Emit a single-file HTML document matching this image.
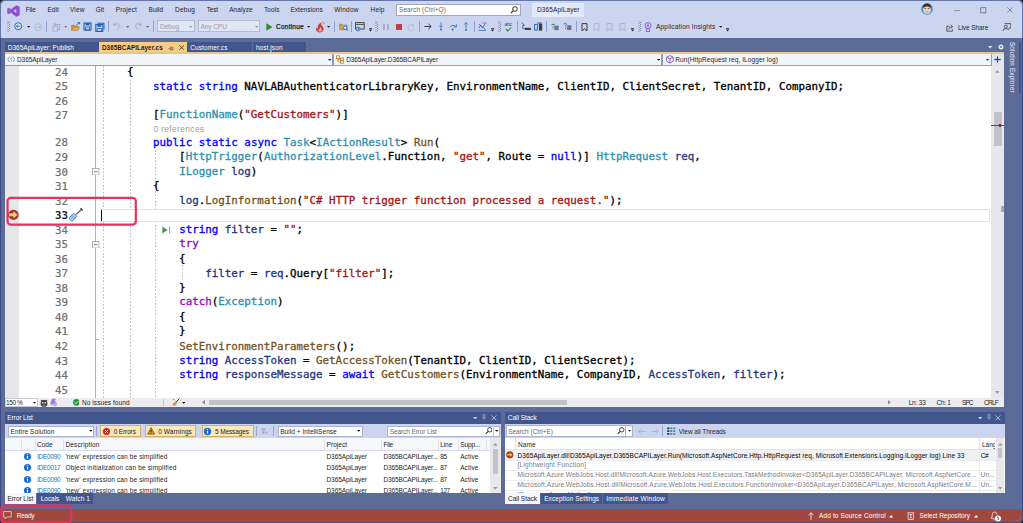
<!DOCTYPE html>
<html><head><meta charset="utf-8"><title>D365ApiLayer</title><style>
html,body{margin:0;padding:0;}
body{width:1023px;height:523px;overflow:hidden;background:#0c0c14;position:relative;font-family:"Liberation Sans",sans-serif;}
.b{position:absolute;box-sizing:border-box;}
.t{position:absolute;white-space:pre;line-height:10px;height:10px;font-family:"Liberation Sans",sans-serif;}
.c{position:absolute;white-space:pre;font-family:"DejaVu Sans Mono","Liberation Mono",monospace;font-size:10.83px;line-height:14px;height:14px;color:#000;left:100.9px;-webkit-text-stroke:0.3px;}
.ln{position:absolute;white-space:pre;font-family:"DejaVu Sans Mono","Liberation Mono",monospace;font-size:10.81px;line-height:14px;height:14px;color:#6e6e6e;-webkit-text-stroke:0.2px;width:30px;text-align:right;left:38.1px;}
.k{color:#0000ff}.ty{color:#2b91af}.s{color:#a31515}.ck{color:#8f08c4}.m{color:#74531f}.v{color:#1f377f}
</style></head><body>
<div class="b" style="left:0.00px;top:0.00px;width:1023.00px;height:523.00px;background:#6577a8;border-radius:4px;"></div>
<div class="b" style="left:0.00px;top:37.70px;width:1023.00px;height:470.90px;background:#3a4a82;"></div>
<div class="b" style="left:0.00px;top:508.60px;width:1023.00px;height:14.40px;background:#5a4870;border-radius:0 0 4px 4px;"></div>
<div class="b" style="left:0.90px;top:0.90px;width:1021.00px;height:521.10px;background:#5d6b99;border-radius:4.5px;"></div>
<div class="b" style="left:0.90px;top:1.00px;width:1021.00px;height:36.70px;background:#ccd5f0;border-radius:4.5px 4.5px 0 0;"></div>
<svg class="b" style="left:6.80px;top:5.00px;" width="13" height="12" viewBox="0 0 13 12"><path d="M9.2 0.4L12.4 1.8V10.2L9.2 11.6L4 7.4L2 9L0.4 8.2V3.8L2 3L4 4.6Z M9.4 3.6V8.4L6.2 6Z M1.9 4.9V7.1L3.3 6Z" fill="#8a4fd0" fill-rule="evenodd" stroke="#8a4fd0" stroke-width="0.4" stroke-linejoin="round"/></svg>
<span class="t" style="left:25.80px;top:5px;font-size:6.5px;color:#1e1e1e;letter-spacing:-0.171px;">File</span>
<span class="t" style="left:47.50px;top:5px;font-size:6.5px;color:#1e1e1e;letter-spacing:-0.001px;">Edit</span>
<span class="t" style="left:70.00px;top:5px;font-size:6.5px;color:#1e1e1e;letter-spacing:0.129px;">View</span>
<span class="t" style="left:95.80px;top:5px;font-size:6.5px;color:#1e1e1e;letter-spacing:-0.037px;">Git</span>
<span class="t" style="left:115.70px;top:5px;font-size:6.5px;color:#1e1e1e;letter-spacing:0.138px;">Project</span>
<span class="t" style="left:148.60px;top:5px;font-size:6.5px;color:#1e1e1e;letter-spacing:0.026px;">Build</span>
<span class="t" style="left:175.00px;top:5px;font-size:6.5px;color:#1e1e1e;letter-spacing:0.189px;">Debug</span>
<span class="t" style="left:206.70px;top:5px;font-size:6.5px;color:#1e1e1e;letter-spacing:-0.180px;">Test</span>
<span class="t" style="left:229.20px;top:5px;font-size:6.5px;color:#1e1e1e;letter-spacing:0.054px;">Analyze</span>
<span class="t" style="left:264.00px;top:5px;font-size:6.5px;color:#1e1e1e;letter-spacing:0.062px;">Tools</span>
<span class="t" style="left:290.40px;top:5px;font-size:6.5px;color:#1e1e1e;letter-spacing:0.050px;">Extensions</span>
<span class="t" style="left:334.20px;top:5px;font-size:6.5px;color:#1e1e1e;letter-spacing:0.246px;">Window</span>
<span class="t" style="left:370.60px;top:5px;font-size:6.5px;color:#1e1e1e;letter-spacing:0.156px;">Help</span>
<div class="b" style="left:396.30px;top:3.50px;width:125.20px;height:12.10px;background:#ffffff;border:1px solid #a3a6b5;"></div>
<span class="t" style="left:399.00px;top:5px;font-size:6.5px;color:#6a6a6a;letter-spacing:0.086px;">Search (Ctrl+Q)</span>
<svg class="b" style="left:509.50px;top:5.50px;" width="8" height="8" viewBox="0 0 8 8"><circle cx="5" cy="3" r="2.3" fill="none" stroke="#333" stroke-width="1"/><path d="M3.4 4.6 L0.8 7.2" stroke="#333" stroke-width="1.2"/></svg>
<div class="b" style="left:531.90px;top:3.10px;width:52.40px;height:13.50px;background:#e3e9fa;"></div>
<span class="t" style="left:537.00px;top:5px;font-size:6.5px;color:#1e1e1e;letter-spacing:0.108px;">D365ApiLayer</span>
<svg class="b" style="left:921.30px;top:3.40px;" width="12" height="12" viewBox="0 0 12 12"><circle cx="6" cy="6" r="5.8" fill="#3b8fd6"/><ellipse cx="6" cy="6.6" rx="4" ry="4.4" fill="#ead2bc"/><path d="M1.8 5.6Q2 0.4 6 0.6Q10 0.4 10.2 5.6Q8.6 3.2 6 3.4Q3.4 3.2 1.8 5.6Z" fill="#3a302c"/><path d="M3.6 5.6H5.2M6.8 5.6H8.4" stroke="#222" stroke-width="0.7"/><path d="M4.8 8.8Q6 9.6 7.2 8.8" stroke="#7a4a3a" stroke-width="0.5" fill="none"/></svg>
<div class="b" style="left:953.60px;top:9.50px;width:6.30px;height:0.60px;background:#9099b8;"></div>
<svg class="b" style="left:980.00px;top:6.80px;" width="7" height="7" viewBox="0 0 7 7"><rect x="0.75" y="0.75" width="5.1" height="5.1" fill="none" stroke="#5c5c66" stroke-width="0.7"/></svg>
<svg class="b" style="left:1006.50px;top:7.00px;" width="6" height="6" viewBox="0 0 6 6"><path d="M0.3 0.3 L5.7 5.7 M5.7 0.3 L0.3 5.7" stroke="#5a6a9a" stroke-width="0.7"/></svg>
<svg class="b" style="left:7.20px;top:21.00px;" width="4" height="11" viewBox="0 0 4 11"><path d="M0.5 0.5h1M2.1 1.5h1M0.5 2.5h1M2.1 3.5h1M0.5 4.5h1M2.1 5.5h1M0.5 6.5h1M2.1 7.5h1M0.5 8.5h1M2.1 9.5h1M0.5 10.5h1" stroke="#6f7ba6" stroke-width="0.9"/></svg>
<svg class="b" style="left:14.30px;top:22.40px;" width="8.4" height="8.4" viewBox="0 0 8.4 8.4"><circle cx="4.2" cy="4.2" r="3.5" fill="#dfe8fa" stroke="#2a6ab8" stroke-width="1"/><path d="M6.2 4.2H2.4M3.9 2.7L2.3 4.2L3.9 5.7" stroke="#2a6ab8" stroke-width="0.9" fill="none"/></svg>
<svg class="b" style="left:26.80px;top:25.90px;" width="3.2" height="2" viewBox="0 0 3.2 2"><path d="M0 0H3.2L1.6 1.8Z" fill="#1e1e1e"/></svg>
<svg class="b" style="left:33.50px;top:22.60px;" width="8.4" height="8.4" viewBox="0 0 8.4 8.4"><circle cx="4.2" cy="4.2" r="3.5" fill="none" stroke="#a9b1cc" stroke-width="0.8"/><path d="M2.2 4.2H6M4.6 2.8L6 4.2L4.6 5.6" stroke="#a9b1cc" stroke-width="0.8" fill="none"/></svg>
<div class="b" style="left:45.95px;top:21.20px;width:0.80px;height:11.20px;background:#8fa1cf;"></div>
<svg class="b" style="left:51.50px;top:22.00px;" width="9" height="10" viewBox="0 0 9 10"><path d="M2.5 0.8V3M1.4 1.9H3.6" stroke="#9aa4c4" stroke-width="0.7"/><rect x="3.2" y="2.4" width="4.6" height="5" fill="none" stroke="#9aa4c4" stroke-width="0.8"/><rect x="1" y="4.2" width="4.4" height="5" fill="#ccd5f0" stroke="#9aa4c4" stroke-width="0.8"/></svg>
<svg class="b" style="left:64.10px;top:25.90px;" width="3.2" height="2" viewBox="0 0 3.2 2"><path d="M0 0H3.2L1.6 1.8Z" fill="#6f7894"/></svg>
<svg class="b" style="left:70.80px;top:21.80px;" width="10" height="9" viewBox="0 0 10 9"><path d="M0.6 3H3.2L4 4H7V8.2H0.6Z" fill="#c9943e" stroke="#a3742a" stroke-width="0.5"/><path d="M0.8 8.2L2.2 5.2H8.6L7 8.2Z" fill="#e0b568" stroke="#a3742a" stroke-width="0.5"/><path d="M5.6 3L8.4 0.6M8.7 2.4V0.4H6.7" stroke="#2a6ab8" stroke-width="1" fill="none"/></svg>
<svg class="b" style="left:83.20px;top:22.40px;" width="9" height="9" viewBox="0 0 9 9"><rect x="1" y="1" width="7" height="7" fill="none" stroke="#1a62b8" stroke-width="1.1"/><rect x="2.6" y="1" width="3.8" height="2.4" fill="#1a62b8"/><rect x="2.4" y="5" width="4.2" height="3" fill="none" stroke="#1a62b8" stroke-width="0.8"/></svg>
<svg class="b" style="left:95.20px;top:22.00px;" width="10" height="10" viewBox="0 0 10 10"><path d="M2.4 1.2H9V7.6" fill="none" stroke="#1a62b8" stroke-width="1"/><rect x="0.8" y="2.4" width="7" height="7" fill="none" stroke="#1a62b8" stroke-width="1.1"/><rect x="2.4000000000000004" y="2.4" width="3.8" height="2.4" fill="#1a62b8"/><rect x="2.2" y="6.4" width="4.2" height="3" fill="none" stroke="#1a62b8" stroke-width="0.8"/></svg>
<div class="b" style="left:108.15px;top:21.20px;width:0.80px;height:11.20px;background:#8fa1cf;"></div>
<svg class="b" style="left:113.40px;top:22.20px;" width="8" height="8.4" viewBox="0 0 8 8.4"><path d="M0.8 0.6V3.2H3.4" fill="none" stroke="#a3abc8" stroke-width="0.9"/><path d="M1 3Q3.8 0.4 6 2.4Q7.8 4.6 3.6 7.8" fill="none" stroke="#a3abc8" stroke-width="0.9"/></svg>
<svg class="b" style="left:126.00px;top:25.90px;" width="3.2" height="2" viewBox="0 0 3.2 2"><path d="M0 0H3.2L1.6 1.8Z" fill="#6a6f84"/></svg>
<svg class="b" style="left:133.60px;top:22.20px;" width="8" height="8.4" viewBox="0 0 8 8.4"><path d="M7.2 0.6V3.2H4.6" fill="none" stroke="#a3abc8" stroke-width="0.9"/><path d="M7 3Q4.2 0.4 2 2.4Q0.2 4.6 4.4 7.8" fill="none" stroke="#a3abc8" stroke-width="0.9"/></svg>
<svg class="b" style="left:146.00px;top:25.90px;" width="3.2" height="2" viewBox="0 0 3.2 2"><path d="M0 0H3.2L1.6 1.8Z" fill="#6a6f84"/></svg>
<div class="b" style="left:152.95px;top:21.20px;width:0.80px;height:11.20px;background:#8fa1cf;"></div>
<div class="b" style="left:157.30px;top:20.40px;width:37.30px;height:12.00px;background:#e1e6f5;border:1px solid #b4b9cc;"></div>
<span class="t" style="left:160.00px;top:22px;font-size:6.5px;color:#969cb2;letter-spacing:0.009px;">Debug</span>
<svg class="b" style="left:188.90px;top:25.90px;" width="3.2" height="2" viewBox="0 0 3.2 2"><path d="M0 0H3.2L1.6 1.8Z" fill="#8a92ad"/></svg>
<div class="b" style="left:197.90px;top:20.40px;width:62.30px;height:12.00px;background:#e1e6f5;border:1px solid #b4b9cc;"></div>
<span class="t" style="left:200.40px;top:22px;font-size:6.5px;color:#969cb2;letter-spacing:-0.048px;">Any CPU</span>
<svg class="b" style="left:254.80px;top:25.90px;" width="3.2" height="2" viewBox="0 0 3.2 2"><path d="M0 0H3.2L1.6 1.8Z" fill="#8a92ad"/></svg>
<svg class="b" style="left:265.80px;top:22.80px;" width="7" height="8" viewBox="0 0 7 8"><path d="M0.3 0.3L6.5 4L0.3 7.7Z" fill="#2e8b2e"/></svg>
<span class="t" style="left:276.10px;top:22px;font-size:6.5px;color:#1e1e1e;letter-spacing:0.221px;-webkit-text-stroke:0.25px;">Continue</span>
<svg class="b" style="left:307.30px;top:25.90px;" width="3.2" height="2" viewBox="0 0 3.2 2"><path d="M0 0H3.2L1.6 1.8Z" fill="#1e1e1e"/></svg>
<svg class="b" style="left:315.00px;top:21.60px;" width="10" height="11" viewBox="0 0 10 11"><path d="M4.8 10.4C1.4 10.4 0.4 7.6 1.6 5.6C2 6.4 2.6 6.6 2.8 6.4C2.2 3.8 4 1.6 6.2 0.6C5.6 2.4 6.6 3.4 7.6 4.6C9.4 6.8 8.6 10.4 4.8 10.4Z" fill="#d13438"/><path d="M4.9 9.8C3.4 9.8 2.8 8.4 3.6 7.2C4 7.8 4.6 7.6 4.6 7C4.6 6 5.4 5.4 6 5C5.8 6 6.8 6.6 6.8 7.8C6.8 9 6 9.8 4.9 9.8Z" fill="#f4b8a8"/><path d="M6.4 0.6L9.6 1.2" stroke="#d13438" stroke-width="0.6"/></svg>
<svg class="b" style="left:327.40px;top:25.90px;" width="3.2" height="2" viewBox="0 0 3.2 2"><path d="M0 0H3.2L1.6 1.8Z" fill="#1e1e1e"/></svg>
<div class="b" style="left:334.05px;top:21.20px;width:0.80px;height:11.20px;background:#8fa1cf;"></div>
<svg class="b" style="left:338.60px;top:22.40px;" width="10" height="9" viewBox="0 0 10 9"><path d="M0.6 2.2H3.4L4.2 3.2H8V7.8H0.6Z" fill="#d9a04a" stroke="#a9702a" stroke-width="0.6"/><circle cx="6.2" cy="5.8" r="1.7" fill="#e8eefc" stroke="#1a62b8" stroke-width="0.8"/><path d="M7.4 7L9 8.6" stroke="#1a62b8" stroke-width="1"/></svg>
<div class="b" style="left:351.05px;top:21.20px;width:0.80px;height:11.20px;background:#8fa1cf;"></div>
<svg class="b" style="left:355.40px;top:22.20px;" width="10" height="9.6" viewBox="0 0 10 9.6"><rect x="0.6" y="0.6" width="8.6" height="6.4" fill="none" stroke="#3c3c3c" stroke-width="0.9"/><path d="M0.6 2.4H9.2" stroke="#3c3c3c" stroke-width="0.9"/><circle cx="3" cy="7" r="2" fill="#ccd5f0" stroke="#1a62b8" stroke-width="0.8"/><path d="M2 7H4M3.2 6.2L4 7L3.2 7.8" stroke="#1a62b8" stroke-width="0.6" fill="none"/></svg>
<svg class="b" style="left:369.00px;top:28.30px;" width="3.2" height="4" viewBox="0 0 3.2 4"><path d="M0 0.4H3.2" stroke="#1e1e1e" stroke-width="0.8"/><path d="M0 1.6H3.2L1.6 3.4Z" fill="#1e1e1e"/></svg>
<svg class="b" style="left:374.90px;top:21.00px;" width="4" height="11" viewBox="0 0 4 11"><path d="M0.5 0.5h1M2.1 1.5h1M0.5 2.5h1M2.1 3.5h1M0.5 4.5h1M2.1 5.5h1M0.5 6.5h1M2.1 7.5h1M0.5 8.5h1M2.1 9.5h1M0.5 10.5h1" stroke="#6f7ba6" stroke-width="0.9"/></svg>
<div class="b" style="left:383.00px;top:23.80px;width:2.40px;height:6.20px;background:#a7afc9;"></div>
<div class="b" style="left:386.70px;top:23.80px;width:2.40px;height:6.20px;background:#a7afc9;"></div>
<div class="b" style="left:395.60px;top:23.80px;width:6.20px;height:5.90px;background:#c8393f;border-radius:0.6px;"></div>
<svg class="b" style="left:406.60px;top:22.60px;" width="9" height="9" viewBox="0 0 9 9"><path d="M6.6 2.4A3.3 3.3 0 1 0 7.6 5" fill="none" stroke="#a9b1cc" stroke-width="0.8"/><path d="M5.4 0.8L7 2.4L5.2 3.6" fill="none" stroke="#a9b1cc" stroke-width="0.8"/></svg>
<div class="b" style="left:418.85px;top:21.20px;width:0.80px;height:11.20px;background:#8fa1cf;"></div>
<svg class="b" style="left:424.40px;top:23.40px;" width="8" height="7" viewBox="0 0 8 7"><path d="M0.4 3.5H7M4.4 0.8L7.2 3.5L4.4 6.2" fill="none" stroke="#2a2a2a" stroke-width="0.9"/></svg>
<svg class="b" style="left:438.20px;top:22.00px;" width="6" height="10" viewBox="0 0 6 10"><path d="M3 0.4V5.2M1.2 3.6L3 5.5L4.8 3.6" fill="none" stroke="#2a6ab8" stroke-width="0.8"/><circle cx="3" cy="7.6" r="1" fill="#2a6ab8"/></svg>
<svg class="b" style="left:449.20px;top:23.00px;" width="8.4" height="8" viewBox="0 0 8.4 8"><path d="M0.8 4.4Q3.8 0.6 6.8 3.6" fill="none" stroke="#2a6ab8" stroke-width="0.9"/><path d="M7.4 1.2V4H4.6" fill="none" stroke="#2a6ab8" stroke-width="0.8"/><circle cx="3.6" cy="6.4" r="1" fill="#2a6ab8"/></svg>
<svg class="b" style="left:462.80px;top:22.00px;" width="6" height="10" viewBox="0 0 6 10"><path d="M3 6V0.8M1.2 2.5L3 0.6L4.8 2.5" fill="none" stroke="#2a6ab8" stroke-width="0.8"/><circle cx="3" cy="7.8" r="1" fill="#2a6ab8"/></svg>
<div class="b" style="left:473.65px;top:21.20px;width:0.80px;height:11.20px;background:#8fa1cf;"></div>
<svg class="b" style="left:478.40px;top:22.40px;" width="9" height="9" viewBox="0 0 9 9"><path d="M0.6 6.4L2.6 3.4L4.6 5.8L7.6 1.2" fill="none" stroke="#7a4fc0" stroke-width="0.9"/><path d="M1 2L7.6 7.6" stroke="#1a62b8" stroke-width="0.8"/><path d="M0.6 8.4H8" stroke="#1a62b8" stroke-width="0.7"/><path d="M4 1H8.4" stroke="#7a4fc0" stroke-width="0.7"/></svg>
<svg class="b" style="left:491.40px;top:28.30px;" width="3.2" height="4" viewBox="0 0 3.2 4"><path d="M0 0.4H3.2" stroke="#1e1e1e" stroke-width="0.8"/><path d="M0 1.6H3.2L1.6 3.4Z" fill="#1e1e1e"/></svg>
<svg class="b" style="left:498.00px;top:21.00px;" width="4" height="11" viewBox="0 0 4 11"><path d="M0.5 0.5h1M2.1 1.5h1M0.5 2.5h1M2.1 3.5h1M0.5 4.5h1M2.1 5.5h1M0.5 6.5h1M2.1 7.5h1M0.5 8.5h1M2.1 9.5h1M0.5 10.5h1" stroke="#6f7ba6" stroke-width="0.9"/></svg>
<span class="t" style="left:504.60px;top:20px;font-size:4.6px;color:#3c3c3c;letter-spacing:-0.007px;">abc</span>
<svg class="b" style="left:505.00px;top:27.00px;" width="7" height="5" viewBox="0 0 7 5"><path d="M0.8 2L2.8 4L6.2 0.6" fill="none" stroke="#2e8b2e" stroke-width="1.1"/></svg>
<div class="b" style="left:516.65px;top:21.20px;width:0.80px;height:11.20px;background:#8fa1cf;"></div>
<svg class="b" style="left:520.60px;top:22.40px;" width="10.4" height="9" viewBox="0 0 10.4 9"><path d="M0.6 0.6L3.4 3.4H1.8V6.6H3.6" fill="none" stroke="#1a62b8" stroke-width="0.9"/><rect x="3.8" y="5.8" width="6" height="2.2" fill="#3c3c3c"/></svg>
<svg class="b" style="left:533.80px;top:22.20px;" width="9" height="9.4" viewBox="0 0 9 9.4"><rect x="0.6" y="2.4" width="3" height="5.6" fill="none" stroke="#1a62b8" stroke-width="0.9"/><rect x="5" y="1.6" width="3.2" height="7" fill="#3c3c3c"/><path d="M3.2 1H7.8" stroke="#3c3c3c" stroke-width="0.8"/></svg>
<div class="b" style="left:546.15px;top:21.20px;width:0.80px;height:11.20px;background:#8fa1cf;"></div>
<svg class="b" style="left:551.20px;top:23.00px;" width="8.4" height="8" viewBox="0 0 8.4 8"><path d="M0.6 1.4H3.8" stroke="#2e8b2e" stroke-width="1"/><rect x="3.4" y="2.6" width="4.2" height="4.6" fill="#6b7390"/><path d="M1.4 3.4H3M1.4 5H3" stroke="#6b7390" stroke-width="0.7"/></svg>
<svg class="b" style="left:563.00px;top:22.40px;" width="9" height="9" viewBox="0 0 9 9"><path d="M0.8 2.2Q2.4 0.2 3.8 2.2L2.2 3.8" fill="none" stroke="#1a62b8" stroke-width="0.9"/><rect x="4.2" y="3.2" width="4.2" height="4.8" fill="#6b7390"/><path d="M2 5H3.8M2 6.6H3.8" stroke="#6b7390" stroke-width="0.7"/></svg>
<div class="b" style="left:575.85px;top:21.20px;width:0.80px;height:11.20px;background:#8fa1cf;"></div>
<svg class="b" style="left:581.40px;top:22.80px;" width="8" height="8.6" viewBox="0 0 8 8.6"><path d="M1 0.6H6V7.8L3.5 5.8L1 7.8Z" fill="none" stroke="#2a2a2a" stroke-width="0.9"/></svg>
<svg class="b" style="left:593.40px;top:22.80px;" width="8" height="8.6" viewBox="0 0 8 8.6"><path d="M1 0.6H6V7.8L3.5 5.8L1 7.8Z" fill="none" stroke="#aab2cc" stroke-width="0.9"/></svg>
<svg class="b" style="left:606.00px;top:22.80px;" width="8" height="8.6" viewBox="0 0 8 8.6"><path d="M1 0.6H6V7.8L3.5 5.8L1 7.8Z" fill="none" stroke="#aab2cc" stroke-width="0.9"/></svg>
<svg class="b" style="left:618.80px;top:22.80px;" width="8" height="8.6" viewBox="0 0 8 8.6"><path d="M1 0.6H6V7.8L3.5 5.8L1 7.8Z" fill="none" stroke="#aab2cc" stroke-width="0.9"/></svg>
<svg class="b" style="left:631.20px;top:28.30px;" width="3.2" height="4" viewBox="0 0 3.2 4"><path d="M0 0.4H3.2" stroke="#1e1e1e" stroke-width="0.8"/><path d="M0 1.6H3.2L1.6 3.4Z" fill="#1e1e1e"/></svg>
<svg class="b" style="left:637.60px;top:21.00px;" width="4" height="11" viewBox="0 0 4 11"><path d="M0.5 0.5h1M2.1 1.5h1M0.5 2.5h1M2.1 3.5h1M0.5 4.5h1M2.1 5.5h1M0.5 6.5h1M2.1 7.5h1M0.5 8.5h1M2.1 9.5h1M0.5 10.5h1" stroke="#6f7ba6" stroke-width="0.9"/></svg>
<svg class="b" style="left:644.40px;top:22.20px;" width="8" height="10" viewBox="0 0 8 10"><circle cx="4" cy="3.6" r="3" fill="none" stroke="#8a4fd0" stroke-width="0.9"/><circle cx="4" cy="3.6" r="1.1" fill="#8a4fd0"/><path d="M2.8 6.4L2.2 9.4H5.8L5.2 6.4" fill="none" stroke="#8a4fd0" stroke-width="0.9"/></svg>
<span class="t" style="left:656.10px;top:22px;font-size:6.5px;color:#1e1e1e;letter-spacing:0.164px;">Application Insights</span>
<svg class="b" style="left:719.00px;top:25.90px;" width="3.2" height="2" viewBox="0 0 3.2 2"><path d="M0 0H3.2L1.6 1.8Z" fill="#1e1e1e"/></svg>
<svg class="b" style="left:726.40px;top:28.30px;" width="3.2" height="4" viewBox="0 0 3.2 4"><path d="M0 0.4H3.2" stroke="#1e1e1e" stroke-width="0.8"/><path d="M0 1.6H3.2L1.6 3.4Z" fill="#1e1e1e"/></svg>
<svg class="b" style="left:945.80px;top:24.00px;" width="8.4" height="8" viewBox="0 0 8.4 8"><path d="M3.4 2.2H0.8V7.2H6.4V5.4" fill="none" stroke="#3c3c3c" stroke-width="0.8"/><path d="M2.6 5.6Q3 2.6 6.2 2.6M4.8 0.8L6.8 2.6L4.8 4.4" fill="none" stroke="#3c3c3c" stroke-width="0.8"/></svg>
<span class="t" style="left:957.90px;top:23px;font-size:6.5px;color:#1e1e1e;letter-spacing:-0.078px;">Live Share</span>
<svg class="b" style="left:1002.00px;top:22.80px;" width="9.4" height="8.6" viewBox="0 0 9.4 8.6"><path d="M2.6 0.6H8.8V5H7.4" fill="none" stroke="#3c3c3c" stroke-width="0.8"/><circle cx="3.8" cy="3.6" r="1.5" fill="none" stroke="#3c3c3c" stroke-width="0.8"/><path d="M0.8 8.2Q1.2 5.6 3.8 5.6Q5.4 5.6 6.2 6.8L7.6 5" fill="none" stroke="#3c3c3c" stroke-width="0.8"/></svg>
<div class="b" style="left:4.90px;top:41.80px;width:94.40px;height:10.80px;background:#40568d;"></div>
<span class="t" style="left:7.80px;top:43px;font-size:6.5px;color:#ffffff;letter-spacing:-0.001px;">D365ApiLayer: Publish</span>
<div class="b" style="left:99.30px;top:41.80px;width:87.80px;height:11.20px;background:#f5cc84;"></div>
<span class="t" style="left:102.00px;top:43px;font-size:6.3px;color:#1e1e1e;letter-spacing:0.049px;font-weight:bold;">D365BCAPILayer.cs</span>
<svg class="b" style="left:167.60px;top:45.60px;" width="6" height="5" viewBox="0 0 6 5"><path d="M0.4 2.6H2.4M2.6 0.8V4.4M2.8 1.4H5V3.8H2.8M2.8 3.2H5" stroke="#6b4a14" stroke-width="0.6" fill="none"/></svg>
<svg class="b" style="left:178.70px;top:45.20px;" width="5.4" height="5.2" viewBox="0 0 5.4 5.2"><path d="M0.4 0.4L5 4.8M5 0.4L0.4 4.8" stroke="#5a3c10" stroke-width="0.9"/></svg>
<div class="b" style="left:187.30px;top:41.80px;width:65.00px;height:10.80px;background:#40568d;"></div>
<span class="t" style="left:190.20px;top:43px;font-size:6.5px;color:#ffffff;letter-spacing:0.107px;">Customer.cs</span>
<div class="b" style="left:252.90px;top:41.80px;width:54.20px;height:10.80px;background:#40568d;border-right:1px dotted #7f8ab5;"></div>
<span class="t" style="left:255.90px;top:43px;font-size:6.5px;color:#ffffff;letter-spacing:0.074px;">host.json</span>
<div class="b" style="left:4.90px;top:52.30px;width:999.10px;height:1.50px;background:#e6c68a;"></div>
<svg class="b" style="left:988.40px;top:46.40px;" width="4.2" height="2.6" viewBox="0 0 4.2 2.6"><path d="M0 0H4.2L2.1 2.4Z" fill="#e6eaf7"/></svg>
<svg class="b" style="left:997.60px;top:44.40px;" width="6" height="6" viewBox="0 0 6 6"><circle cx="3" cy="3" r="1.7" fill="none" stroke="#e6eaf7" stroke-width="1.2"/><path d="M3 0V6M0 3H6M0.9 0.9L5.1 5.1M5.1 0.9L0.9 5.1" stroke="#e6eaf7" stroke-width="0.7"/><circle cx="3" cy="3" r="0.9" fill="#5d6b99"/></svg>
<div class="b" style="left:4.90px;top:53.60px;width:999.10px;height:12.40px;background:#8e9bc3;"></div>
<div class="b" style="left:4.90px;top:53.60px;width:327.60px;height:11.40px;background:#f3f5fc;"></div>
<div class="b" style="left:334.40px;top:53.60px;width:326.30px;height:11.40px;background:#f3f5fc;"></div>
<div class="b" style="left:663.00px;top:53.60px;width:327.60px;height:11.40px;background:#f3f5fc;"></div>
<div class="b" style="left:991.50px;top:53.60px;width:12.50px;height:12.00px;background:#dfe5f7;"></div>
<svg class="b" style="left:6.60px;top:55.00px;" width="8.6" height="8.6" viewBox="0 0 8.6 8.6"><path d="M2.6 1.6L0.8 4.3L2.6 7" fill="none" stroke="#3a8ad8" stroke-width="0.8"/><path d="M6 1.6L7.8 4.3L6 7" fill="none" stroke="#3a8ad8" stroke-width="0.8"/><path d="M5 0.4L2.8 4.6H4.4L3.4 8.2L6 3.6H4.4Z" fill="#f2a33a"/></svg>
<span class="t" style="left:17.00px;top:55px;font-size:6.5px;color:#1e1e1e;letter-spacing:-0.075px;">D365ApiLayer</span>
<svg class="b" style="left:327.60px;top:58.60px;" width="3.2" height="2" viewBox="0 0 3.2 2"><path d="M0 0H3.2L1.6 1.8Z" fill="#1e1e1e"/></svg>
<svg class="b" style="left:336.20px;top:55.00px;" width="8.4" height="8.6" viewBox="0 0 8.4 8.6"><rect x="0.6" y="0.8" width="3" height="2.6" fill="none" stroke="#c27d1a" stroke-width="0.8"/><rect x="4.6" y="3" width="3" height="2.6" fill="none" stroke="#c27d1a" stroke-width="0.8"/><rect x="4.6" y="5.8" width="3" height="2.4" fill="none" stroke="#c27d1a" stroke-width="0.8"/><path d="M2 3.4V7H4.6M2 4.4H4.6" fill="none" stroke="#c27d1a" stroke-width="0.7"/></svg>
<span class="t" style="left:346.20px;top:55px;font-size:6.5px;color:#1e1e1e;letter-spacing:-0.080px;">D365ApiLayer.D365BCAPILayer</span>
<svg class="b" style="left:656.80px;top:58.60px;" width="3.2" height="2" viewBox="0 0 3.2 2"><path d="M0 0H3.2L1.6 1.8Z" fill="#1e1e1e"/></svg>
<svg class="b" style="left:665.80px;top:55.00px;" width="7.8" height="8.6" viewBox="0 0 7.8 8.6"><path d="M3.9 0.6L7.2 2.2V6.2L3.9 8L0.6 6.2V2.2Z M0.6 2.2L3.9 3.8L7.2 2.2M3.9 3.8V8" fill="none" stroke="#7a3fc0" stroke-width="0.8"/></svg>
<span class="t" style="left:675.30px;top:55px;font-size:6.5px;color:#1e1e1e;letter-spacing:0.090px;">Run(HttpRequest req, ILogger log)</span>
<svg class="b" style="left:986.40px;top:58.60px;" width="3.2" height="2" viewBox="0 0 3.2 2"><path d="M0 0H3.2L1.6 1.8Z" fill="#1e1e1e"/></svg>
<svg class="b" style="left:994.20px;top:55.60px;" width="7" height="7" viewBox="0 0 7 7"><path d="M0.4 3.5H6.6M3.5 0.4V6.6" stroke="#1e1e1e" stroke-width="0.9"/><path d="M0.4 2.9H6.6M0.4 4.1H6.6" stroke="#777" stroke-width="0.5"/></svg>
<div class="b" style="left:4.90px;top:66.00px;width:999.10px;height:331.60px;background:#ffffff;"></div>
<div class="b" style="left:4.90px;top:66.00px;width:14.10px;height:331.60px;background:#e6e7e8;"></div>
<div class="b" style="left:94.90px;top:66.00px;width:1.00px;height:331.60px;background:#b2b2b2;"></div>
<div class="b" style="left:102.7px;top:66px;width:1px;height:331.6px;background:repeating-linear-gradient(to bottom,#c6c6c6 0,#c6c6c6 1.8px,transparent 1.8px,transparent 3.4px);"></div>
<div class="b" style="left:129.5px;top:80px;width:1px;height:317.6px;background:repeating-linear-gradient(to bottom,#c6c6c6 0,#c6c6c6 1.8px,transparent 1.8px,transparent 3.4px);"></div>
<div class="b" style="left:155.3px;top:150px;width:1px;height:247.60000000000002px;background:repeating-linear-gradient(to bottom,#c6c6c6 0,#c6c6c6 1.8px,transparent 1.8px,transparent 3.4px);"></div>
<div class="b" style="left:181.8px;top:265px;width:1px;height:15px;background:repeating-linear-gradient(to bottom,#c6c6c6 0,#c6c6c6 1.8px,transparent 1.8px,transparent 3.4px);"></div>
<div class="b" style="left:991.20px;top:66.00px;width:12.80px;height:331.60px;background:#e8e8ec;"></div>
<svg class="b" style="left:995.40px;top:69.80px;" width="4.6" height="3" viewBox="0 0 4.6 3"><path d="M0 2.8H4.6L2.3 0Z" fill="#9a9aa2"/></svg>
<div class="b" style="left:993.90px;top:112.40px;width:7.70px;height:33.70px;background:#c2c3c9;"></div>
<div class="b" style="left:991.20px;top:125.10px;width:12.80px;height:1.40px;background:#3a3acc;"></div>
<div class="b" style="left:998.50px;top:124.20px;width:2.80px;height:3.20px;background:#7a3040;"></div>
<div class="b" style="left:1001.20px;top:206.20px;width:2.80px;height:6.10px;background:#a8a8ae;"></div>
<svg class="b" style="left:995.40px;top:391.00px;" width="4.6" height="3" viewBox="0 0 4.6 3"><path d="M0 0H4.6L2.3 2.8Z" fill="#9a9aa2"/></svg>
<div class="b" style="left:100.00px;top:209.00px;width:890.00px;height:12.60px;background:#ffffff;border:1px solid #e2e2ee;border-left:none;"></div>
<div class="ln" style="top:66.00px;">24</div>
<div class="c" style="top:65.00px;">    {</div>
<div class="ln" style="top:80.00px;">25</div>
<div class="c" style="top:80.00px;">        <span class="k">static</span> <span class="k">string</span> NAVLABAuthenticatorLibraryKey, EnvironmentName, ClientID, ClientSecret, TenantID, CompanyID;</div>
<div class="ln" style="top:95.00px;">26</div>
<div class="ln" style="top:109.00px;">27</div>
<div class="c" style="top:108.00px;">        [<span class="ty">FunctionName</span>(<span class="s">"GetCustomers"</span>)]</div>
<div class="ln" style="top:136.00px;">28</div>
<div class="c" style="top:136.00px;">        <span class="k">public</span> <span class="k">static</span> <span class="k">async</span> <span class="ty">Task</span>&lt;<span class="ty">IActionResult</span>&gt; <span class="m">Run</span>(</div>
<div class="ln" style="top:151.00px;">29</div>
<div class="c" style="top:150.00px;">            [<span class="ty">HttpTrigger</span>(<span class="ty">AuthorizationLevel</span>.Function, <span class="s">"get"</span>, Route = <span class="k">null</span>)] <span class="ty">HttpRequest</span> <span class="v">req</span>,</div>
<div class="ln" style="top:166.00px;">30</div>
<div class="c" style="top:165.00px;">            <span class="ty">ILogger</span> <span class="v">log</span>)</div>
<div class="ln" style="top:180.00px;">31</div>
<div class="c" style="top:179.00px;">        {</div>
<div class="ln" style="top:195.00px;">32</div>
<div class="c" style="top:194.00px;">            <span class="v">log</span>.<span class="m">LogInformation</span>(<span class="s">"C# HTTP trigger function processed a request."</span>);</div>
<div class="ln" style="top:209.00px;color:#1e1e1e;font-weight:bold;-webkit-text-stroke:0;">33</div>
<div class="ln" style="top:224.00px;">34</div>
<div class="c" style="top:223.00px;">            <span class="k">string</span> <span class="v">filter</span> = <span class="s">""</span>;</div>
<div class="ln" style="top:238.00px;">35</div>
<div class="c" style="top:237.00px;">            <span class="ck">try</span></div>
<div class="ln" style="top:253.00px;">36</div>
<div class="c" style="top:252.00px;">            {</div>
<div class="ln" style="top:267.00px;">37</div>
<div class="c" style="top:267.00px;">                <span class="v">filter</span> = <span class="v">req</span>.Query[<span class="s">"filter"</span>];</div>
<div class="ln" style="top:282.00px;">38</div>
<div class="c" style="top:281.00px;">            }</div>
<div class="ln" style="top:296.00px;">39</div>
<div class="c" style="top:295.00px;">            <span class="ck">catch</span>(<span class="ty">Exception</span>)</div>
<div class="ln" style="top:311.00px;">40</div>
<div class="c" style="top:310.00px;">            {</div>
<div class="ln" style="top:325.00px;">41</div>
<div class="c" style="top:324.00px;">            }</div>
<div class="ln" style="top:340.00px;">42</div>
<div class="c" style="top:340.00px;">            <span class="m">SetEnvironmentParameters</span>();</div>
<div class="ln" style="top:355.00px;">43</div>
<div class="c" style="top:354.00px;">            <span class="k">string</span> <span class="v">AccessToken</span> = <span class="m">GetAccessToken</span>(TenantID, ClientID, ClientSecret);</div>
<div class="ln" style="top:369.00px;">44</div>
<div class="c" style="top:368.00px;">            <span class="k">string</span> <span class="v">responseMessage</span> = <span class="k">await</span> <span class="m">GetCustomers</span>(EnvironmentName, CompanyID, <span class="v">AccessToken</span>, <span class="v">filter</span>);</div>
<div class="ln" style="top:384.00px;">45</div>
<span class="t" style="left:153.40px;top:124px;font-size:8.4px;color:#9e9e9e;letter-spacing:0.378px;">0 references</span>
<svg class="b" style="left:92.30px;top:167.70px;" width="7.4" height="7.4" viewBox="0 0 7.4 7.4"><rect x="0.4" y="0.4" width="6.6" height="6.6" fill="#fff" stroke="#a0a0a0" stroke-width="0.8"/><path d="M1.8 3.7H5.6" stroke="#555" stroke-width="0.8"/></svg>
<svg class="b" style="left:92.30px;top:241.00px;" width="7.4" height="7.4" viewBox="0 0 7.4 7.4"><rect x="0.4" y="0.4" width="6.6" height="6.6" fill="#fff" stroke="#a0a0a0" stroke-width="0.8"/><path d="M1.8 3.7H5.6" stroke="#555" stroke-width="0.8"/></svg>
<div class="b" style="left:95.60px;top:339.00px;width:3.00px;height:0.80px;background:#b2b2b2;"></div>
<svg class="b" style="left:7.60px;top:209.40px;" width="11" height="12" viewBox="0 0 11 12"><circle cx="5.5" cy="5.8" r="5.1" fill="#bf3030"/><path d="M0.6 3.9H5V1.5L10.2 5.8L5 10.1V7.7H0.6Z" fill="#f6c877" stroke="#5a3a14" stroke-width="0.7" stroke-linejoin="round"/></svg>
<svg class="b" style="left:69.40px;top:208.30px;" width="14" height="13.4" viewBox="0 0 14 13.4"><path d="M12.6 1.2L7.8 6" stroke="#6a6a6a" stroke-width="1.5" stroke-linecap="round"/><path d="M12 0.8L13.2 2" stroke="#555" stroke-width="1.7" stroke-linecap="round"/><rect x="-2.3" y="-3.6" width="4.6" height="7.2" rx="1.3" transform="translate(3.9 9.3) rotate(42)" fill="#b9d3f3" stroke="#3a7fd0" stroke-width="0.9"/><path d="M1.8 8.6L5 11.4M3 7.2L6.2 10M2.2 11L5.6 7.4" stroke="#3a7fd0" stroke-width="0.45"/></svg>
<div class="b" style="left:100.80px;top:209.80px;width:0.80px;height:11.00px;background:#000;"></div>
<svg class="b" style="left:161.80px;top:226.20px;" width="9" height="8" viewBox="0 0 9 8"><path d="M0.4 0.5L5.6 4L0.4 7.5Z" fill="#4a9a4a"/><path d="M7.6 0.6V7.4" stroke="#6aaa6a" stroke-width="0.9"/></svg>
<svg class="b" style="left:0.00px;top:190.00px;" width="145" height="40" viewBox="0 0 145 40"><rect x="7.55" y="7.8" width="128.25" height="26.9" rx="3.2" fill="none" stroke="#e8305c" stroke-width="2.2"/></svg>
<div class="b" style="left:4.90px;top:397.60px;width:999.10px;height:9.80px;background:#ececf0;"></div>
<div class="b" style="left:4.90px;top:397.80px;width:33.20px;height:9.40px;background:#ffffff;border:1px solid #c8cbd6;"></div>
<span class="t" style="left:5.90px;top:398px;font-size:6.5px;color:#1e1e1e;letter-spacing:-0.367px;">150 %</span>
<svg class="b" style="left:33.40px;top:401.60px;" width="3.2" height="2" viewBox="0 0 3.2 2"><path d="M0 0H3.2L1.6 1.8Z" fill="#1e1e1e"/></svg>
<svg class="b" style="left:40.00px;top:398.60px;" width="8" height="8" viewBox="0 0 8 8"><circle cx="4" cy="4.4" r="3.4" fill="#3a3a3a"/><circle cx="2.7" cy="3.8" r="0.9" fill="#e8e8e8"/><circle cx="5.3" cy="3.8" r="0.9" fill="#e8e8e8"/><path d="M1 1.2L2.4 2.4M7 1.2L5.6 2.4" stroke="#3a3a3a" stroke-width="1.1"/><path d="M2.6 6.2H5.4" stroke="#e8e8e8" stroke-width="0.6"/></svg>
<svg class="b" style="left:49.20px;top:398.40px;" width="8.4" height="8.4" viewBox="0 0 8.4 8.4"><path d="M0.8 6.8L3.2 0.8H7L5.2 3.6H7.6L2 8L3.4 5.2Z" fill="#9a78e0"/><circle cx="6" cy="6.2" r="1.6" fill="#c4b0f0" stroke="#8a5fd8" stroke-width="0.4"/></svg>
<svg class="b" style="left:72.60px;top:399.20px;" width="6.8" height="6.8" viewBox="0 0 6.8 6.8"><circle cx="3.4" cy="3.4" r="3.3" fill="#1f9a3a"/><path d="M1.7 3.5L2.9 4.7L5.1 2.3" fill="none" stroke="#fff" stroke-width="0.9"/></svg>
<span class="t" style="left:82.00px;top:398px;font-size:6.5px;color:#1e1e1e;letter-spacing:0.065px;">No issues found</span>
<div class="b" style="left:162.90px;top:398.60px;width:0.60px;height:7.80px;background:#c2c4cf;"></div>
<svg class="b" style="left:171.60px;top:398.40px;" width="8" height="8.4" viewBox="0 0 8 8.4"><path d="M7.4 0.6L3.6 4.6" stroke="#3c3c3c" stroke-width="1"/><path d="M3.8 3.6L5 4.8L2.4 8L0.6 6.2Z" fill="#d9a04a" stroke="#a9702a" stroke-width="0.4"/><path d="M1.2 1.2l.9 .9M2.1 1.2l-.9 .9" stroke="#1a62b8" stroke-width="0.5"/></svg>
<svg class="b" style="left:181.80px;top:401.60px;" width="3.2" height="2" viewBox="0 0 3.2 2"><path d="M0 0H3.2L1.6 1.8Z" fill="#1e1e1e"/></svg>
<svg class="b" style="left:202.40px;top:400.20px;" width="3" height="4.6" viewBox="0 0 3 4.6"><path d="M3 0V4.6L0 2.3Z" fill="#8a8a92"/></svg>
<div class="b" style="left:208.90px;top:399.60px;width:358.10px;height:5.80px;background:#c2c3c9;"></div>
<svg class="b" style="left:888.40px;top:400.20px;" width="3" height="4.6" viewBox="0 0 3 4.6"><path d="M0 0V4.6L3 2.3Z" fill="#8a8a92"/></svg>
<span class="t" style="left:908.70px;top:398px;font-size:6.5px;color:#1e1e1e;letter-spacing:-0.180px;">Ln: 33</span>
<span class="t" style="left:936.50px;top:398px;font-size:6.5px;color:#1e1e1e;letter-spacing:-0.309px;">Ch: 1</span>
<span class="t" style="left:962.00px;top:398px;font-size:6.5px;color:#1e1e1e;letter-spacing:-0.958px;">SPC</span>
<span class="t" style="left:984.00px;top:398px;font-size:6.5px;color:#1e1e1e;letter-spacing:-0.746px;">CRLF</span>
<span class="t" style="font-size:6.3px;color:#eef1fa;left:1007.2px;top:41.6px;writing-mode:vertical-rl;height:auto;width:10px;letter-spacing:0.16px;">Solution Explorer</span>
<div class="b" style="left:1018.90px;top:41.50px;width:2.60px;height:51.10px;background:#44548c;"></div>
<div class="b" style="left:4.90px;top:411.60px;width:495.70px;height:12.20px;background:#40568d;"></div>
<span class="t" style="left:7.30px;top:413px;font-size:6.5px;color:#ffffff;letter-spacing:-0.088px;">Error List</span>
<svg class="b" style="left:473.40px;top:416.60px;" width="4.4" height="2.6" viewBox="0 0 4.4 2.6"><path d="M0 0H4.4L2.2 2.4Z" fill="#c9d2ee"/></svg>
<svg class="b" style="left:482.40px;top:414.40px;" width="4" height="6.4" viewBox="0 0 4 6.4"><path d="M1.1 0.5V3.7M2.9 0.5V3.7M1.1 0.5H2.9M0.3 3.8H3.7M2 3.8V6.2" stroke="#c9d2ee" stroke-width="0.5" fill="none"/></svg>
<svg class="b" style="left:490.80px;top:414.60px;" width="6" height="6" viewBox="0 0 6 6"><path d="M0.4 0.4L5.4 5.4M5.4 0.4L0.4 5.4" stroke="#c9d2ee" stroke-width="0.8"/></svg>
<div class="b" style="left:4.90px;top:423.80px;width:495.70px;height:14.20px;background:#ccd5f0;"></div>
<div class="b" style="left:4.90px;top:438.00px;width:495.70px;height:55.00px;background:#ffffff;"></div>
<div class="b" style="left:8.20px;top:425.60px;width:85.60px;height:11.00px;background:#ffffff;border:1px solid #aab3cf;"></div>
<span class="t" style="left:10.50px;top:427px;font-size:6.5px;color:#1e1e1e;letter-spacing:0.115px;">Entire Solution</span>
<svg class="b" style="left:88.60px;top:430.20px;" width="3.2" height="2" viewBox="0 0 3.2 2"><path d="M0 0H3.2L1.6 1.8Z" fill="#1e1e1e"/></svg>
<div class="b" style="left:96.00px;top:426.00px;width:0.60px;height:10.00px;background:#9aa5c8;"></div>
<div class="b" style="left:100.00px;top:425.40px;width:40.50px;height:12.00px;background:#fbe7b9;border:1px solid #d2ae66;"></div>
<svg class="b" style="left:101.80px;top:426.80px;" width="9" height="9" viewBox="0 0 9 9"><circle cx="4.5" cy="4.5" r="3.6" fill="#c4282d"/><path d="M3 3L6 6M6 3L3 6" stroke="#fff" stroke-width="0.9"/></svg>
<span class="t" style="left:113.70px;top:427px;font-size:6.5px;color:#1e1e1e;letter-spacing:-0.128px;">0 Errors</span>
<div class="b" style="left:145.00px;top:425.40px;width:51.20px;height:12.00px;background:#fbe7b9;border:1px solid #d2ae66;"></div>
<svg class="b" style="left:147.20px;top:427.20px;" width="8.2" height="7.6" viewBox="0 0 8.2 7.6"><path d="M4.1 0.5L7.8 7.2H0.4Z" fill="#c9982c" stroke="#7a5a14" stroke-width="0.7" stroke-linejoin="round"/><path d="M4.1 2.8V5M4.1 5.6V6.4" stroke="#2a1e08" stroke-width="0.9"/></svg>
<span class="t" style="left:158.20px;top:427px;font-size:6.5px;color:#1e1e1e;letter-spacing:0.116px;">0 Warnings</span>
<div class="b" style="left:201.70px;top:425.40px;width:52.10px;height:12.00px;background:#fbe7b9;border:1px solid #d2ae66;"></div>
<svg class="b" style="left:203.20px;top:426.80px;" width="9" height="9" viewBox="0 0 9 9"><circle cx="4.5" cy="4.5" r="3.7" fill="#1a6fd0"/><path d="M4.5 4V6.6" stroke="#fff" stroke-width="1.1"/><circle cx="4.5" cy="2.6" r="0.7" fill="#fff"/></svg>
<span class="t" style="left:215.00px;top:427px;font-size:6.5px;color:#1e1e1e;letter-spacing:-0.125px;">5 Messages</span>
<div class="b" style="left:256.30px;top:426.00px;width:0.60px;height:10.00px;background:#9aa5c8;"></div>
<svg class="b" style="left:261.40px;top:427.60px;" width="7.4" height="7.4" viewBox="0 0 7.4 7.4"><path d="M0.4 0.8H4.2L2.8 2.8V5.8L1.8 5.2V2.8Z" fill="none" stroke="#8a93b3" stroke-width="0.7"/><path d="M4.6 3.2L5.2 5.6L7 3.8" fill="none" stroke="#8a93b3" stroke-width="0.7"/></svg>
<div class="b" style="left:273.30px;top:426.00px;width:0.60px;height:10.00px;background:#9aa5c8;"></div>
<div class="b" style="left:277.70px;top:425.60px;width:85.10px;height:11.00px;background:#ffffff;border:1px solid #aab3cf;"></div>
<span class="t" style="left:280.20px;top:427px;font-size:6.5px;color:#1e1e1e;letter-spacing:0.057px;">Build + IntelliSense</span>
<svg class="b" style="left:357.20px;top:430.20px;" width="3.2" height="2" viewBox="0 0 3.2 2"><path d="M0 0H3.2L1.6 1.8Z" fill="#1e1e1e"/></svg>
<div class="b" style="left:386.80px;top:425.60px;width:113.40px;height:11.00px;background:#ffffff;border:1px solid #aab3cf;"></div>
<span class="t" style="left:389.80px;top:427px;font-size:6.5px;color:#6a6a6a;letter-spacing:-0.105px;">Search Error List</span>
<svg class="b" style="left:484.60px;top:427.20px;" width="7.6" height="7.6" viewBox="0 0 7.6 7.6"><circle cx="4.8" cy="2.8" r="2.2" fill="none" stroke="#333" stroke-width="0.9"/><path d="M3.2 4.4L0.7 6.9" stroke="#333" stroke-width="1.1"/></svg>
<div class="b" style="left:493.40px;top:426.20px;width:0.60px;height:9.40px;background:#c8cbd6;"></div>
<svg class="b" style="left:495.00px;top:430.20px;" width="3.2" height="2" viewBox="0 0 3.2 2"><path d="M0 0H3.2L1.6 1.8Z" fill="#1e1e1e"/></svg>
<div class="b" style="left:4.90px;top:438.00px;width:484.90px;height:12.50px;background:#f7f8fc;border-bottom:1px solid #d5d9e8;"></div>
<div class="b" style="left:20.50px;top:438.60px;width:0.60px;height:11.40px;background:#dfe2ee;"></div>
<div class="b" style="left:34.70px;top:438.60px;width:0.60px;height:11.40px;background:#dfe2ee;"></div>
<div class="b" style="left:62.90px;top:438.60px;width:0.60px;height:11.40px;background:#dfe2ee;"></div>
<div class="b" style="left:323.70px;top:438.60px;width:0.60px;height:11.40px;background:#dfe2ee;"></div>
<div class="b" style="left:380.70px;top:438.60px;width:0.60px;height:11.40px;background:#dfe2ee;"></div>
<div class="b" style="left:437.70px;top:438.60px;width:0.60px;height:11.40px;background:#dfe2ee;"></div>
<div class="b" style="left:457.70px;top:438.60px;width:0.60px;height:11.40px;background:#dfe2ee;"></div>
<div class="b" style="left:486.20px;top:438.60px;width:0.60px;height:11.40px;background:#dfe2ee;"></div>
<span class="t" style="left:37.00px;top:440px;font-size:6.5px;color:#1e1e1e;letter-spacing:-0.012px;">Code</span>
<span class="t" style="left:65.50px;top:440px;font-size:6.5px;color:#1e1e1e;letter-spacing:0.135px;">Description</span>
<span class="t" style="left:326.50px;top:440px;font-size:6.5px;color:#1e1e1e;letter-spacing:0.067px;">Project</span>
<span class="t" style="left:383.50px;top:440px;font-size:6.5px;color:#1e1e1e;letter-spacing:-0.246px;">File</span>
<span class="t" style="left:440.20px;top:440px;font-size:6.5px;color:#1e1e1e;letter-spacing:-0.074px;">Line</span>
<span class="t" style="left:460.20px;top:440px;font-size:6.5px;color:#1e1e1e;letter-spacing:-0.087px;">Supp...</span>
<div class="b" style="left:4.9px;top:450px;width:485px;height:43px;overflow:hidden;">
<svg class="b" style="left:18.00px;top:2.00px;" width="9" height="9" viewBox="0 0 9 9"><circle cx="4.5" cy="4.5" r="3.55" fill="#1a6fd0"/><path d="M4.5 4V6.5" stroke="#fff" stroke-width="1.1"/><circle cx="4.5" cy="2.6" r="0.7" fill="#fff"/></svg>
<span class="t" style="left:32.10px;top:2px;font-size:6.5px;color:#2a6fb5;letter-spacing:-0.257px;">IDE0090</span>
<span class="t" style="left:60.60px;top:2px;font-size:6.5px;color:#1e1e1e;letter-spacing:0.121px;">'new' expression can be simplified</span>
<span class="t" style="left:321.60px;top:2px;font-size:6.5px;color:#1e1e1e;letter-spacing:-0.075px;">D365ApiLayer</span>
<span class="t" style="left:378.60px;top:2px;font-size:6.5px;color:#1e1e1e;letter-spacing:-0.122px;">D365BCAPILayer...</span>
<span class="t" style="left:435.30px;top:2px;font-size:6.5px;color:#1e1e1e;letter-spacing:-0.317px;">85</span>
<span class="t" style="left:455.30px;top:2px;font-size:6.5px;color:#1e1e1e;letter-spacing:0.099px;">Active</span>
<svg class="b" style="left:18.00px;top:13.40px;" width="9" height="9" viewBox="0 0 9 9"><circle cx="4.5" cy="4.5" r="3.55" fill="#1a6fd0"/><path d="M4.5 4V6.5" stroke="#fff" stroke-width="1.1"/><circle cx="4.5" cy="2.6" r="0.7" fill="#fff"/></svg>
<span class="t" style="left:32.10px;top:13px;font-size:6.5px;color:#2a6fb5;letter-spacing:-0.257px;">IDE0017</span>
<span class="t" style="left:60.60px;top:13px;font-size:6.5px;color:#1e1e1e;letter-spacing:0.169px;">Object initialization can be simplified</span>
<span class="t" style="left:321.60px;top:13px;font-size:6.5px;color:#1e1e1e;letter-spacing:-0.075px;">D365ApiLayer</span>
<span class="t" style="left:378.60px;top:13px;font-size:6.5px;color:#1e1e1e;letter-spacing:-0.122px;">D365BCAPILayer...</span>
<span class="t" style="left:435.30px;top:13px;font-size:6.5px;color:#1e1e1e;letter-spacing:-0.317px;">87</span>
<span class="t" style="left:455.30px;top:13px;font-size:6.5px;color:#1e1e1e;letter-spacing:0.099px;">Active</span>
<svg class="b" style="left:18.00px;top:25.00px;" width="9" height="9" viewBox="0 0 9 9"><circle cx="4.5" cy="4.5" r="3.55" fill="#1a6fd0"/><path d="M4.5 4V6.5" stroke="#fff" stroke-width="1.1"/><circle cx="4.5" cy="2.6" r="0.7" fill="#fff"/></svg>
<span class="t" style="left:32.10px;top:25px;font-size:6.5px;color:#2a6fb5;letter-spacing:-0.257px;">IDE0090</span>
<span class="t" style="left:60.60px;top:25px;font-size:6.5px;color:#1e1e1e;letter-spacing:0.121px;">'new' expression can be simplified</span>
<span class="t" style="left:321.60px;top:25px;font-size:6.5px;color:#1e1e1e;letter-spacing:-0.075px;">D365ApiLayer</span>
<span class="t" style="left:378.60px;top:25px;font-size:6.5px;color:#1e1e1e;letter-spacing:-0.122px;">D365BCAPILayer...</span>
<span class="t" style="left:435.30px;top:25px;font-size:6.5px;color:#1e1e1e;letter-spacing:-0.317px;">87</span>
<span class="t" style="left:455.30px;top:25px;font-size:6.5px;color:#1e1e1e;letter-spacing:0.099px;">Active</span>
<svg class="b" style="left:18.00px;top:36.40px;" width="9" height="9" viewBox="0 0 9 9"><circle cx="4.5" cy="4.5" r="3.55" fill="#1a6fd0"/><path d="M4.5 4V6.5" stroke="#fff" stroke-width="1.1"/><circle cx="4.5" cy="2.6" r="0.7" fill="#fff"/></svg>
<span class="t" style="left:32.10px;top:36px;font-size:6.5px;color:#2a6fb5;letter-spacing:-0.257px;">IDE0090</span>
<span class="t" style="left:60.60px;top:36px;font-size:6.5px;color:#1e1e1e;letter-spacing:0.121px;">'new' expression can be simplified</span>
<span class="t" style="left:321.60px;top:36px;font-size:6.5px;color:#1e1e1e;letter-spacing:-0.075px;">D365ApiLayer</span>
<span class="t" style="left:378.60px;top:36px;font-size:6.5px;color:#1e1e1e;letter-spacing:-0.122px;">D365BCAPILayer...</span>
<span class="t" style="left:435.30px;top:36px;font-size:6.5px;color:#1e1e1e;letter-spacing:-0.420px;">127</span>
<span class="t" style="left:455.30px;top:36px;font-size:6.5px;color:#1e1e1e;letter-spacing:0.099px;">Active</span>
</div>
<div class="b" style="left:489.80px;top:438.00px;width:10.80px;height:55.00px;background:#e8e8ec;"></div>
<svg class="b" style="left:493.30px;top:442.80px;" width="4.6" height="3" viewBox="0 0 4.6 3"><path d="M0 2.8H4.6L2.3 0Z" fill="#9a9aa2"/></svg>
<div class="b" style="left:493.00px;top:448.80px;width:5.00px;height:25.70px;background:#c2c3c9;"></div>
<svg class="b" style="left:493.30px;top:486.80px;" width="4.6" height="3" viewBox="0 0 4.6 3"><path d="M0 0H4.6L2.3 2.8Z" fill="#9a9aa2"/></svg>
<div class="b" style="left:5.40px;top:493.00px;width:30.90px;height:11.40px;background:#f5f6fb;"></div>
<span class="t" style="left:7.50px;top:494px;font-size:6.5px;color:#1e1e1e;letter-spacing:-0.067px;">Error List</span>
<div class="b" style="left:36.80px;top:493.00px;width:25.00px;height:11.40px;background:#40568d;"></div>
<span class="t" style="left:40.80px;top:494px;font-size:6.5px;color:#ffffff;letter-spacing:-0.066px;">Locals</span>
<div class="b" style="left:62.40px;top:493.00px;width:30.90px;height:11.40px;background:#40568d;"></div>
<span class="t" style="left:65.80px;top:494px;font-size:6.5px;color:#ffffff;letter-spacing:0.084px;">Watch 1</span>
<div class="b" style="left:505.40px;top:411.60px;width:499.60px;height:12.20px;background:#40568d;"></div>
<span class="t" style="left:507.80px;top:413px;font-size:6.5px;color:#ffffff;letter-spacing:-0.027px;">Call Stack</span>
<svg class="b" style="left:977.80px;top:416.60px;" width="4.4" height="2.6" viewBox="0 0 4.4 2.6"><path d="M0 0H4.4L2.2 2.4Z" fill="#c9d2ee"/></svg>
<svg class="b" style="left:986.80px;top:414.40px;" width="4" height="6.4" viewBox="0 0 4 6.4"><path d="M1.1 0.5V3.7M2.9 0.5V3.7M1.1 0.5H2.9M0.3 3.8H3.7M2 3.8V6.2" stroke="#c9d2ee" stroke-width="0.5" fill="none"/></svg>
<svg class="b" style="left:995.20px;top:414.60px;" width="6" height="6" viewBox="0 0 6 6"><path d="M0.4 0.4L5.4 5.4M5.4 0.4L0.4 5.4" stroke="#c9d2ee" stroke-width="0.8"/></svg>
<div class="b" style="left:505.40px;top:423.80px;width:499.60px;height:14.20px;background:#ccd5f0;"></div>
<div class="b" style="left:505.40px;top:438.00px;width:499.60px;height:55.00px;background:#ffffff;"></div>
<div class="b" style="left:505.60px;top:425.20px;width:120.80px;height:11.60px;background:#ffffff;border:1px solid #aab3cf;"></div>
<span class="t" style="left:508.20px;top:427px;font-size:6.5px;color:#6a6a6a;letter-spacing:-0.012px;">Search (Ctrl+E)</span>
<svg class="b" style="left:617.40px;top:427.20px;" width="7.6" height="7.6" viewBox="0 0 7.6 7.6"><circle cx="4.8" cy="2.8" r="2.2" fill="none" stroke="#333" stroke-width="0.9"/><path d="M3.2 4.4L0.7 6.9" stroke="#333" stroke-width="1.1"/></svg>
<div class="b" style="left:626.40px;top:425.20px;width:7.00px;height:11.60px;background:#ffffff;border:1px solid #aab3cf;border-left:none;"></div>
<svg class="b" style="left:628.40px;top:430.20px;" width="3.2" height="2" viewBox="0 0 3.2 2"><path d="M0 0H3.2L1.6 1.8Z" fill="#1e1e1e"/></svg>
<svg class="b" style="left:638.00px;top:427.60px;" width="8" height="7" viewBox="0 0 8 7"><path d="M7.4 3.5H0.8M3.4 0.9L0.7 3.5L3.4 6.1" fill="none" stroke="#a3acc9" stroke-width="0.8"/></svg>
<svg class="b" style="left:651.00px;top:427.60px;" width="8" height="7" viewBox="0 0 8 7"><path d="M0.6 3.5H7.2M4.6 0.9L7.3 3.5L4.6 6.1" fill="none" stroke="#a3acc9" stroke-width="0.8"/></svg>
<div class="b" style="left:662.20px;top:426.00px;width:0.60px;height:10.00px;background:#9aa5c8;"></div>
<svg class="b" style="left:667.40px;top:427.00px;" width="8.6" height="8.4" viewBox="0 0 8.6 8.4"><path d="M0.3 0.4h2v1.8h-2zM0.3 3.2h2v1.8h-2zM0.3 6h2v1.8h-2z" fill="#2a2a2a"/><path d="M3.3 0.4h2v1.8h-2zM6.3 0.4h2v1.8h-2zM3.3 3.2h2v1.8h-2zM6.3 3.2h2v1.8h-2zM3.3 6h2v1.8h-2zM6.3 6h2v1.8h-2z" fill="#2f8fb0"/></svg>
<span class="t" style="left:678.80px;top:427px;font-size:6.5px;color:#1e1e1e;letter-spacing:-0.052px;">View all Threads</span>
<div class="b" style="left:505.40px;top:438.00px;width:490.20px;height:11.60px;background:#ffffff;border-bottom:1px solid #dfe2ee;"></div>
<div class="b" style="left:514.80px;top:438.40px;width:0.60px;height:10.80px;background:#dfe2ee;"></div>
<div class="b" style="left:978.80px;top:438.40px;width:0.60px;height:10.80px;background:#dfe2ee;"></div>
<span class="t" style="left:518.00px;top:440px;font-size:6.5px;color:#1e1e1e;letter-spacing:0.114px;">Name</span>
<div class="b" style="left:979.6px;top:438px;width:15.4px;height:11px;overflow:hidden;">
<span class="t" style="left:2.40px;top:2px;font-size:6.5px;color:#1e1e1e;">Language</span>
</div>
<div class="b" style="left:505.40px;top:450.20px;width:490.20px;height:9.60px;background:#f1f1f4;"></div>
<div class="b" style="left:505.40px;top:459.80px;width:490.20px;height:0.50px;background:#ececf2;"></div>
<div class="b" style="left:505.40px;top:469.70px;width:490.20px;height:0.50px;background:#ececf2;"></div>
<div class="b" style="left:505.40px;top:479.60px;width:490.20px;height:0.50px;background:#ececf2;"></div>
<div class="b" style="left:505.40px;top:489.50px;width:490.20px;height:0.50px;background:#ececf2;"></div>
<div class="b" style="left:978.80px;top:450.00px;width:0.50px;height:43.00px;background:#ececf2;"></div>
<svg class="b" style="left:506.20px;top:451.20px;" width="7.6" height="7.6" viewBox="0 0 7.6 7.6"><circle cx="3.8" cy="3.8" r="3.6" fill="#c4282d"/><path d="M0.6 2.8H3.6V1.2L7 3.8L3.6 6.4V4.8H0.6Z" fill="#f6c94a" stroke="#6b4a10" stroke-width="0.5"/></svg>
<span class="t" style="left:517.50px;top:451px;font-size:6.5px;color:#000000;letter-spacing:0.085px;">D365ApiLayer.dll!D365ApiLayer.D365BCAPILayer.Run(Microsoft.AspNetCore.Http.HttpRequest req, Microsoft.Extensions.Logging.ILogger log) Line 33</span>
<span class="t" style="left:980.80px;top:451px;font-size:6.5px;color:#000000;letter-spacing:-0.556px;">C#</span>
<span class="t" style="left:517.50px;top:460px;font-size:6.5px;color:#7c7c7c;letter-spacing:0.248px;">[Lightweight Function]</span>
<span class="t" style="left:517.50px;top:470px;font-size:6.5px;color:#7c7c7c;letter-spacing:0.083px;">Microsoft.Azure.WebJobs.Host.dll!Microsoft.Azure.WebJobs.Host.Executors.TaskMethodInvoker&lt;D365ApiLayer.D365BCAPILayer, Microsoft.AspNetCore...</span>
<span class="t" style="left:980.80px;top:470px;font-size:6.5px;color:#7c7c7c;letter-spacing:-0.107px;">Un...</span>
<span class="t" style="left:517.50px;top:480px;font-size:6.5px;color:#7c7c7c;letter-spacing:0.104px;">Microsoft.Azure.WebJobs.Host.dll!Microsoft.Azure.WebJobs.Host.Executors.FunctionInvoker&lt;D365ApiLayer.D365BCAPILayer, Microsoft.AspNetCore.M...</span>
<span class="t" style="left:980.80px;top:480px;font-size:6.5px;color:#7c7c7c;letter-spacing:-0.107px;">Un...</span>
<div class="b" style="left:505.4px;top:486px;width:490px;height:7px;overflow:hidden;">
<span class="t" style="left:12.10px;top:4px;font-size:6.5px;color:#7c7c7c;letter-spacing:-0.114px;">[Resuming Async Method]</span>
</div>
<div class="b" style="left:995.60px;top:438.00px;width:8.90px;height:55.00px;background:#e8e8ec;"></div>
<svg class="b" style="left:997.70px;top:442.80px;" width="4.6" height="3" viewBox="0 0 4.6 3"><path d="M0 2.8H4.6L2.3 0Z" fill="#9a9aa2"/></svg>
<div class="b" style="left:997.50px;top:448.20px;width:4.50px;height:9.80px;background:#c2c3c9;"></div>
<svg class="b" style="left:997.70px;top:486.80px;" width="4.6" height="3" viewBox="0 0 4.6 3"><path d="M0 0H4.6L2.3 2.8Z" fill="#9a9aa2"/></svg>
<div class="b" style="left:505.40px;top:493.00px;width:34.60px;height:11.40px;background:#f5f6fb;"></div>
<span class="t" style="left:508.00px;top:494px;font-size:6.5px;color:#1e1e1e;letter-spacing:-0.027px;">Call Stack</span>
<div class="b" style="left:541.20px;top:493.00px;width:60.80px;height:11.40px;background:#40568d;"></div>
<span class="t" style="left:544.20px;top:494px;font-size:6.5px;color:#ffffff;letter-spacing:0.064px;">Exception Settings</span>
<div class="b" style="left:603.00px;top:493.00px;width:64.50px;height:11.40px;background:#40568d;"></div>
<span class="t" style="left:606.20px;top:494px;font-size:6.5px;color:#ffffff;letter-spacing:0.220px;">Immediate Window</span>
<div class="b" style="left:0.90px;top:508.60px;width:1021.00px;height:13.30px;background:#a0483e;border-radius:0 0 4.5px 4.5px;"></div>
<svg class="b" style="left:3.20px;top:511.00px;" width="9" height="8.6" viewBox="0 0 9 8.6"><path d="M0.6 0.6H8.2V6H3.8L2 7.8V6H0.6Z" fill="none" stroke="#f3dcd8" stroke-width="0.8"/></svg>
<span class="t" style="left:16.80px;top:511px;font-size:6.5px;color:#ffffff;letter-spacing:-0.279px;">Ready</span>
<svg class="b" style="left:0.00px;top:503.00px;" width="76" height="20" viewBox="0 0 76 20"><rect x="1.4" y="2.7" width="69.8" height="16.6" rx="2.8" fill="none" stroke="#e8305c" stroke-width="2.2"/></svg>
<svg class="b" style="left:807.60px;top:511.60px;" width="6" height="8.4" viewBox="0 0 6 8.4"><path d="M3 8.2V0.8M0.5 3.3L3 0.7L5.5 3.3" fill="none" stroke="#fff" stroke-width="0.8"/></svg>
<span class="t" style="left:819.00px;top:511px;font-size:6.5px;color:#ffffff;letter-spacing:0.136px;">Add to Source Control</span>
<svg class="b" style="left:889.40px;top:515.00px;" width="4.4" height="2.6" viewBox="0 0 4.4 2.6"><path d="M0 2.6H4.4L2.2 0Z" fill="#fff"/></svg>
<svg class="b" style="left:907.00px;top:512.00px;" width="7.6" height="8" viewBox="0 0 7.6 8"><path d="M0.4 0.8H7.2M1.2 0.8V7.4H6.4V0.8M2.4 2.6H5.2M3.8 2.6V5.6M2.8 5.8H4.8" fill="none" stroke="#fff" stroke-width="0.7"/></svg>
<span class="t" style="left:919.50px;top:511px;font-size:6.5px;color:#ffffff;letter-spacing:-0.027px;">Select Repository</span>
<svg class="b" style="left:974.00px;top:515.00px;" width="4.4" height="2.6" viewBox="0 0 4.4 2.6"><path d="M0 2.6H4.4L2.2 0Z" fill="#fff"/></svg>
<svg class="b" style="left:989.80px;top:510.60px;" width="12" height="11" viewBox="0 0 12 11"><path d="M1.2 7.4Q2.2 6.2 2.2 4Q2.4 1 4.6 1Q6.8 1 7 3.6" fill="none" stroke="#f3dcd8" stroke-width="0.8"/><path d="M1.2 7.4H4.6M3.4 8.8H5.2" stroke="#f3dcd8" stroke-width="0.8"/><circle cx="8" cy="7.4" r="3" fill="#fff"/><path d="M7.4 6.4L8.2 5.8V9.2" stroke="#40203a" stroke-width="0.8" fill="none"/></svg>
<svg class="b" style="left:1014.60px;top:514.60px;" width="6" height="6" viewBox="0 0 6 6"><path d="M4.6 0.6L0.6 4.6" stroke="#8a3c34" stroke-width="0.9"/><path d="M5.2 0.4V5.2H0.4" fill="none" stroke="#b4665c" stroke-width="0.7"/></svg>
</body></html>
